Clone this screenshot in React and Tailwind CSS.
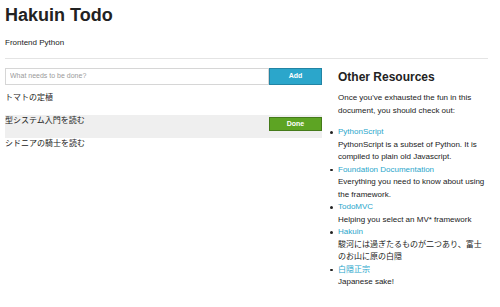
import React from 'react';

const todos = [
  { text: 'トマトの定植', active: false },
  { text: '型システム入門を読む', active: true },
  { text: 'シドニアの騎士を読む', active: false },
];

const resources = [
  { title: 'PythonScript', desc: 'PythonScript is a subset of Python. It is compiled to plain old Javascript.' },
  { title: 'Foundation Documentation', desc: 'Everything you need to know about using the framework.' },
  { title: 'TodoMVC', desc: 'Helping you select an MV* framework' },
  { title: 'Hakuin', desc: '駿河には過ぎたるものが二つあり、富士のお山に原の白隠' },
  { title: '白隠正宗', desc: 'Japanese sake!' },
];

const font = { fontFamily: '"Liberation Sans", "Noto Sans CJK JP", sans-serif' };

export default function App() {
  return (
    <div className="w-[500px] h-[307px] overflow-hidden bg-white text-[#222] px-[5px]" style={font}>
      {/* Header */}
      <h1 className="mt-[4px] text-[18px] leading-[22px] font-bold">Hakuin Todo</h1>
      <p className="mt-[11px] text-[8px] leading-[12px]">Frontend Python</p>
      <hr className="mt-[9px] w-[483px] border-0 border-t border-[#e4e4e4]" />

      <div className="flex mt-[9px]">
        {/* Todo list */}
        <div className="w-[317px]">
          <div className="flex h-[17px]">
            <input
              placeholder="What needs to be done?"
              className="flex-1 min-w-0 border border-[#d6d6d6] px-[4px] text-[7px] placeholder:text-[#9a9a9a] outline-none"
            />
            <button className="w-[53px] bg-[#2ba6cb] border border-[#2284a4] text-white text-[7px] font-bold">
              Add
            </button>
          </div>
          <div className="mt-[7px]">
            {todos.map((t, i) => (
              <div key={i} className={`flex justify-between h-[23px] ${t.active ? 'bg-[#efefef]' : ''}`}>
                <span className="text-[8px] leading-[12px]">{t.text}</span>
                {t.active && (
                  <button className="mt-[2px] w-[53px] h-[14px] bg-[#5da423] border border-[#457a1a] text-white text-[7px] font-bold">
                    Done
                  </button>
                )}
              </div>
            ))}
          </div>
        </div>

        {/* Other resources */}
        <div className="ml-[16px] w-[150px]">
          <h2 className="mt-[1px] text-[12px] leading-[16px] font-bold">Other Resources</h2>
          <p className="mt-[7px] text-[8px] leading-[12.6px]">
            Once you've exhausted the fun in this document, you should check out:
          </p>
          <ul className="mt-[9px] text-[8px] leading-[12.5px]">
            {resources.map((r, i) => (
              <li key={i} className="relative">
                <span className="absolute left-[-8px] top-[5px] w-[2.5px] h-[2.5px] rounded-full bg-[#222]" />
                <a className="text-[#2ba6cb]">{r.title}</a>
                <div>{r.desc}</div>
              </li>
            ))}
          </ul>
        </div>
      </div>
    </div>
  );
}
